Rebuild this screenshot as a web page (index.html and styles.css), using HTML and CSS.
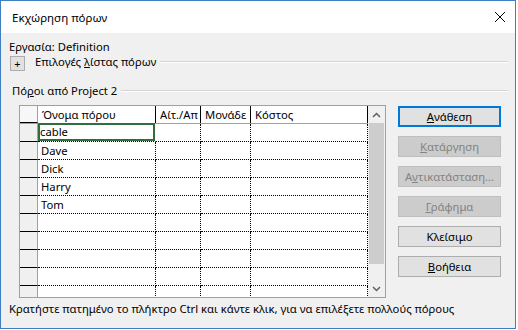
FILE: index.html
```html
<!DOCTYPE html>
<html lang="el">
<head>
    <meta charset="UTF-8">
    <title>Εκχώρηση πόρων</title>
    <link rel="stylesheet" href="styles.css">
</head>
<body>
    <div class="window">
        <div class="titlebar">
            <span class="title">Εκχώρηση πόρων</span>
            <svg class="close" width="12" height="12" viewBox="0 0 12 12">
                <path d="M1 1 L11 11 M11 1 L1 11" stroke="#000" stroke-width="1" fill="none"/>
            </svg>
        </div>
        <div class="content">
            <div class="task">Εργασία: Definition</div>
            <div class="section options">
                <span class="plus">+</span>
                <span class="label">Επιλογές <u>λ</u>ίστας πόρων</span>
                <span class="rule"></span>
            </div>
            <div class="section group">
                <span class="label">Πό<u>ρ</u>οι από Project 2</span>
                <span class="rule"></span>
            </div>
            <div class="main">
                <div class="grid-box">
                    <div class="sheet">
                        <div class="row head">
                            <div class="cell rh"></div>
                            <div class="cell">Όνομα πόρου</div>
                            <div class="cell">Αίτ./Απ</div>
                            <div class="cell">Μονάδε</div>
                            <div class="cell">Κόστος</div>
                        </div>
                        <div class="row">
                            <div class="cell rh"></div>
                            <div class="cell active">cable</div>
                            <div class="cell"></div><div class="cell"></div><div class="cell"></div>
                        </div>
                        <div class="row">
                            <div class="cell rh"></div>
                            <div class="cell">Dave</div>
                            <div class="cell"></div><div class="cell"></div><div class="cell"></div>
                        </div>
                        <div class="row">
                            <div class="cell rh"></div>
                            <div class="cell">Dick</div>
                            <div class="cell"></div><div class="cell"></div><div class="cell"></div>
                        </div>
                        <div class="row">
                            <div class="cell rh"></div>
                            <div class="cell">Harry</div>
                            <div class="cell"></div><div class="cell"></div><div class="cell"></div>
                        </div>
                        <div class="row">
                            <div class="cell rh"></div>
                            <div class="cell">Tom</div>
                            <div class="cell"></div><div class="cell"></div><div class="cell"></div>
                        </div>
                        <div class="row">
                            <div class="cell rh"></div>
                            <div class="cell"></div><div class="cell"></div><div class="cell"></div><div class="cell"></div>
                        </div>
                        <div class="row">
                            <div class="cell rh"></div>
                            <div class="cell"></div><div class="cell"></div><div class="cell"></div><div class="cell"></div>
                        </div>
                        <div class="row">
                            <div class="cell rh"></div>
                            <div class="cell"></div><div class="cell"></div><div class="cell"></div><div class="cell"></div>
                        </div>
                        <div class="row">
                            <div class="cell rh"></div>
                            <div class="cell"></div><div class="cell"></div><div class="cell"></div><div class="cell"></div>
                        </div>
                        <div class="row">
                            <div class="cell rh"></div>
                            <div class="cell"></div><div class="cell"></div><div class="cell"></div><div class="cell"></div>
                        </div>
                    </div>
                    <div class="scrollbar">
                        <div class="arrow">
                            <svg width="9" height="6" viewBox="0 0 9 6"><path d="M1 5 L4.5 1.5 L8 5" stroke="#606060" stroke-width="1.5" fill="none"/></svg>
                        </div>
                        <div class="track"><div class="thumb"></div></div>
                        <div class="arrow">
                            <svg width="9" height="6" viewBox="0 0 9 6"><path d="M1 1 L4.5 4.5 L8 1" stroke="#606060" stroke-width="1.5" fill="none"/></svg>
                        </div>
                    </div>
                </div>
                <div class="buttons">
                    <button class="btn default"><u>Α</u>νάθεση</button>
                    <button class="btn" disabled><u>Κ</u>ατάργηση</button>
                    <button class="btn" disabled>Α<u>ν</u>τικατάσταση...</button>
                    <button class="btn" disabled><u>Γ</u>ράφημα</button>
                    <button class="btn">Κλείσιμο</button>
                    <button class="btn"><u>Β</u>οήθεια</button>
                </div>
            </div>
            <div class="hint">Κρατήστε πατημένο το πλήκτρο Ctrl και κάντε κλικ, για να επιλέξετε πολλούς πόρους</div>
        </div>
    </div>
</body>
</html>
```

FILE: styles.css
```css
* {
    margin: 0;
    padding: 0;
    box-sizing: border-box;
}

body {
    background: #fff;
    font-family: "Noto Sans", "DejaVu Sans", sans-serif;
    font-size: 11.25px;
    color: #000;
}

.window {
    width: 516px;
    height: 329px;
    border: 1px solid #3d7fc1;
    background: #f0f0f0;
    display: flex;
    flex-direction: column;
}

.titlebar {
    height: 32px;
    background: #fff;
    display: flex;
    align-items: center;
    justify-content: space-between;
    padding: 0 9px 0 11px;
}

.title {
    font-size: 11.5px;
}

.content {
    flex: 1;
    padding: 6px 7px 0 8px;
    display: flex;
    flex-direction: column;
}

.task {
    height: 16px;
    line-height: 16px;
}

.section {
    display: flex;
    align-items: center;
    height: 16px;
    line-height: 16px;
}

.options {
    margin-top: -1px;
}

.plus {
    width: 15px;
    height: 15px;
    margin: 3px 10px 0 1px;
    background: #e1e1e1;
    border: 1px solid #adadad;
    font-size: 11px;
    line-height: 13px;
    text-align: center;
}

.group {
    margin-top: 13px;
    padding-left: 3px;
}

.rule {
    flex: 1;
    margin-left: 4px;
    height: 2px;
    border-top: 1px solid #d5d5d5;
    border-bottom: 1px solid #fff;
}

.main {
    display: flex;
    margin-top: 6px;
    padding-left: 10px;
}

.grid-box {
    width: 367px;
    height: 193px;
    border: 1px solid #a0a0a0;
    background: #fff;
    display: flex;
    overflow: hidden;
}

.sheet {
    width: 348px;
}

.row {
    display: grid;
    grid-template-columns: 18px 118px 45px 50px 117px;
    height: 18px;
}

.row.head {
    height: 18px;
    background: #fff;
    border-bottom: 1px solid #a0a0a0;
}

.cell {
    border-right: 1px dotted #000;
    border-bottom: 1px dotted #000;
    padding-left: 3px;
    line-height: 17px;
    white-space: nowrap;
    overflow: hidden;
}

.head .cell {
    border-bottom: none;
    border-right: 1px solid #000;
    padding-left: 4px;
}

.cell.rh {
    background: #f0f0f0;
    border-right: 1px solid #a0a0a0;
    border-bottom: 1px solid #000;
}

.head .cell.rh {
    background: #f7f7f7;
    border-right: 1px solid #a0a0a0;
}

.cell.active {
    box-shadow: inset 0 0 0 2px #2f6f3e;
    border-right-color: transparent;
    margin-top: -1px;
    line-height: 18px;
    height: 19px;
    padding-left: 2px;
}

.scrollbar {
    width: 17px;
    background: #f0f0f0;
    display: flex;
    flex-direction: column;
}

.arrow {
    height: 17px;
    display: flex;
    align-items: center;
    justify-content: center;
}

.track {
    flex: 1;
    padding: 0 1px;
}

.thumb {
    height: 141px;
    background: #cdcdcd;
}

.buttons {
    display: flex;
    flex-direction: column;
    gap: 9px;
    margin-left: 12px;
    margin-top: 1px;
}

.btn {
    width: 103px;
    height: 21px;
    background: #e1e1e1;
    border: 1px solid #adadad;
    font-family: inherit;
    font-size: 11.25px;
    color: #000;
}

.btn.default {
    border: 2px solid #0078d7;
}

.btn:disabled {
    background: #cccccc;
    border-color: #bfbfbf;
    color: #838383;
}

.hint {
    margin-top: 3px;
    height: 16px;
    line-height: 16px;
}
```
